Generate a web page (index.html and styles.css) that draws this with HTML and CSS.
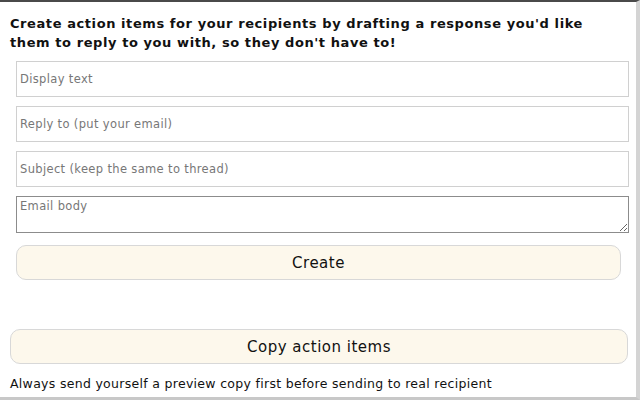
FILE: index.html
```html
<!DOCTYPE html>
<html>
<head>
<meta charset="utf-8">
<link rel="stylesheet" href="styles.css">
</head>
<body>
<div class="frame">
  <div class="page">
    <h1 class="title">Create action items for your recipients by drafting a response you'd like them to reply to you with, so they don't have to!</h1>
    <div class="fields">
      <input class="field" type="text" placeholder="Display text">
      <input class="field" type="text" placeholder="Reply to (put your email)">
      <input class="field" type="text" placeholder="Subject (keep the same to thread)">
      <textarea class="body-field" placeholder="Email body"></textarea>
      <button class="btn btn-create">Create</button>
    </div>
    <button class="btn btn-copy">Copy action items</button>
    <p class="note">Always send yourself a preview copy first before sending to real recipient</p>
  </div>
</div>
</body>
</html>
```
FILE: styles.css
```css
html, body {
  margin: 0;
  padding: 0;
  background: #ffffff;
}
.frame {
  width: 640px;
  height: 400px;
  box-sizing: border-box;
  border-top: 2px solid #4a4a4a;
  border-right: 4px solid #d4d4d4;
  border-bottom: 3px solid #c8c8c8;
  overflow: hidden;
  font-family: "DejaVu Sans", sans-serif;
  color: #111;
}
.page {
  padding: 12px 10px 0 10px;
  display: flex;
  flex-direction: column;
}
.title {
  margin: 0;
  max-width: 605px;
  font-size: 13px;
  line-height: 19px;
  font-weight: 700;
  letter-spacing: 0.58px;
  color: #111;
}
.fields {
  margin: 9px 0 0 6px;
  width: 613px;
  display: flex;
  flex-direction: column;
  gap: 9px;
}
.field, .body-field {
  box-sizing: border-box;
  width: 613px;
  height: 36px;
  margin: 0;
  border: 1px solid #d0d0d0;
  padding: 0 3px;
  font-family: "DejaVu Sans", sans-serif;
  font-size: 11.5px;
  letter-spacing: 0.35px;
  background: #fff;
  outline: none;
}
.body-field {
  height: 37px;
  border: 1px solid #8c8c8c;
  padding: 2px 3px;
  resize: vertical;
  display: block;
}
.field::placeholder, .body-field::placeholder {
  color: #777;
}
.btn {
  box-sizing: border-box;
  height: 35px;
  border: 1px solid #d8d8d8;
  border-radius: 10px;
  background: #fdf8ec;
  font-family: "DejaVu Sans", sans-serif;
  font-size: 15px;
  letter-spacing: 0.5px;
  color: #111;
  padding: 0;
}
.btn-create {
  width: 605px;
  margin-top: 3px;
}
.btn-copy {
  width: 618px;
  margin-top: 49px;
}
.note {
  margin: 12px 0 0 0;
  font-size: 12.5px;
  line-height: 16px;
  letter-spacing: 0.3px;
  color: #111;
}
```
